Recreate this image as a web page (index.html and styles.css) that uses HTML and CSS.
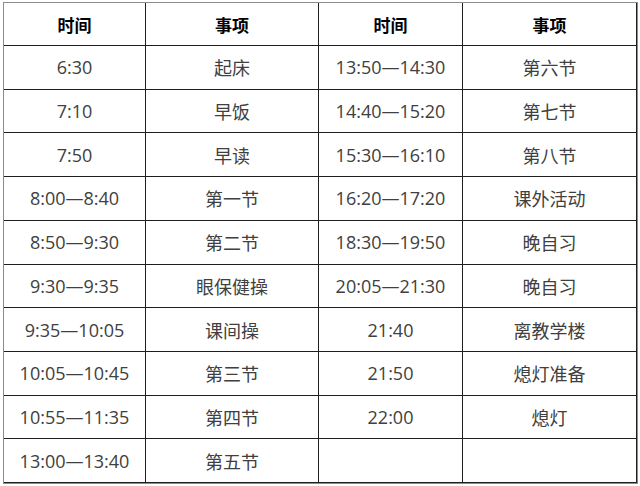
FILE: index.html
```html
<!DOCTYPE html>
<html lang="zh">
<head>
<meta charset="utf-8">
<title>作息时间表</title>
<link rel="stylesheet" href="styles.css">
</head>
<body>
<div class="schedule">
  <div class="cell head">时间</div>
  <div class="cell head">事项</div>
  <div class="cell head">时间</div>
  <div class="cell head">事项</div>

  <div class="cell">6:30</div><div class="cell">起床</div><div class="cell">13:50—14:30</div><div class="cell">第六节</div>
  <div class="cell">7:10</div><div class="cell">早饭</div><div class="cell">14:40—15:20</div><div class="cell">第七节</div>
  <div class="cell">7:50</div><div class="cell">早读</div><div class="cell">15:30—16:10</div><div class="cell">第八节</div>
  <div class="cell">8:00—8:40</div><div class="cell">第一节</div><div class="cell">16:20—17:20</div><div class="cell">课外活动</div>
  <div class="cell">8:50—9:30</div><div class="cell">第二节</div><div class="cell">18:30—19:50</div><div class="cell">晚自习</div>
  <div class="cell">9:30—9:35</div><div class="cell">眼保健操</div><div class="cell">20:05—21:30</div><div class="cell">晚自习</div>
  <div class="cell">9:35—10:05</div><div class="cell">课间操</div><div class="cell">21:40</div><div class="cell">离教学楼</div>
  <div class="cell">10:05—10:45</div><div class="cell">第三节</div><div class="cell">21:50</div><div class="cell">熄灯准备</div>
  <div class="cell">10:55—11:35</div><div class="cell">第四节</div><div class="cell">22:00</div><div class="cell">熄灯</div>
  <div class="cell">13:00—13:40</div><div class="cell">第五节</div><div class="cell"></div><div class="cell"></div>
</div>
</body>
</html>
```
FILE: styles.css
```css
html, body {
  margin: 0;
  padding: 0;
  background: #ffffff;
}
body {
  padding: 2px 0 0 3px;
  font-family: "Open Sans", "Noto Sans CJK SC", sans-serif;
}
.schedule {
  display: grid;
  grid-template-columns: 142px 173px 144px 174px;
  grid-template-rows: 43px repeat(10, 1fr);
  width: 633px;
  height: 480px;
  border: 1px solid #8c8c8c;
}
.cell {
  display: flex;
  align-items: center;
  justify-content: center;
  border-right: 1px solid #1e1e1e;
  border-bottom: 1px solid #1e1e1e;
  font-size: 18px;
  color: #404040;
  white-space: nowrap;
}
.head {
  font-weight: bold;
  font-size: 17px;
  color: #000000;
}
```
